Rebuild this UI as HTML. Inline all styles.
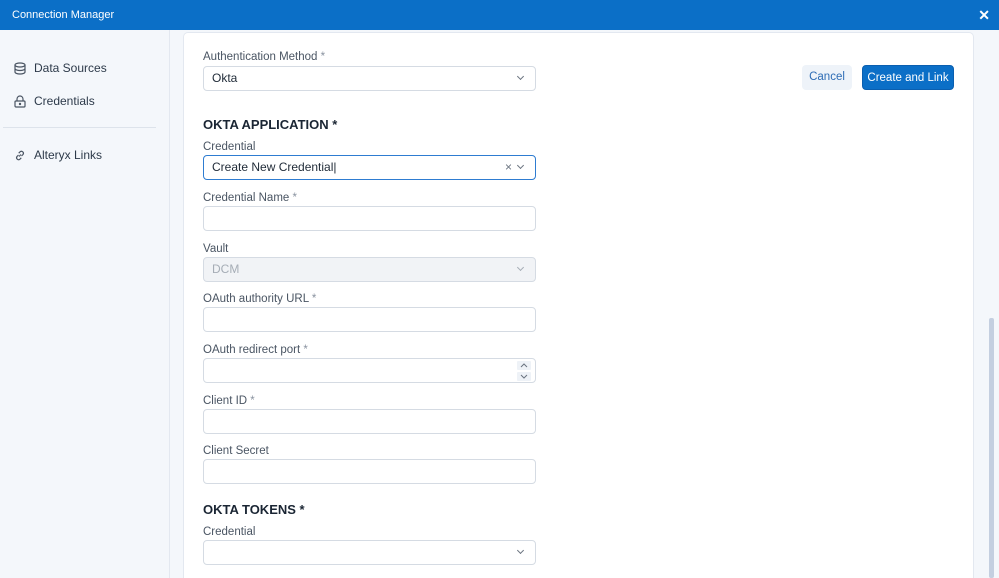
<!DOCTYPE html>
<html><head><meta charset="utf-8"><style>
*{box-sizing:border-box;margin:0;padding:0}
html,body{width:999px;height:578px;overflow:hidden}
body{font-family:"Liberation Sans",sans-serif;background:#f4f7fb;position:relative;color:#1f2a37}
.top{position:absolute;left:0;top:0;width:999px;height:30px;background:#0b6fc7;color:#fff;font-size:11px;line-height:30px;padding-left:12px}
.top .x{position:absolute;right:9px;top:0;font-weight:bold;font-size:14px}
.side{position:absolute;left:0;top:30px;width:170px;height:548px;border-right:1px solid #e3e8f0;background:#f4f7fb}
.nav{position:absolute;left:14px;font-size:12px;color:#2d3a4a;display:flex;align-items:center}
.nav svg{margin-right:8px}
.sep{position:absolute;left:3px;top:97px;width:153px;height:1px;background:#dde3eb}
.card{position:absolute;left:183px;top:32px;width:791px;height:546px;background:#fff;border:1px solid #e3e8f0;border-bottom:none;border-radius:5px 5px 0 0}
.lbl{position:absolute;left:203px;font-size:11.5px;color:#4a5563}
.lbl i{font-style:normal;color:#8a93a0}
.inp{position:absolute;left:203px;width:333px;height:25px;border:1px solid #d5dbe3;border-radius:4px;background:#fff;font-size:12px;line-height:23px;padding-left:8px;color:#1f2a37}
.chev{position:absolute;right:12px;top:7px;width:5px;height:5px;border-right:1.2px solid #6b7480;border-bottom:1.2px solid #6b7480;transform:rotate(45deg)}
h2{position:absolute;left:203px;font-size:13px;font-weight:bold;color:#1a2533}
.btn{position:absolute;top:65px;height:25px;border-radius:4px;font-size:11.5px;line-height:25px;text-align:center}
.sb{position:absolute;left:989px;top:318px;width:5px;height:260px;background:#c4cfe0;border-radius:2px}
</style></head><body>
<div class="top">Connection Manager<span class="x">✕</span></div>
<div class="side">
<div class="nav" style="top:31px"><svg width="12" height="13" viewBox="0 0 12 13" fill="none" stroke="#4a5563" stroke-width="1.2"><ellipse cx="6" cy="3" rx="5" ry="2"/><path d="M1 3v7c0 1.1 2.2 2 5 2s5-.9 5-2V3M1 6.5c0 1.1 2.2 2 5 2s5-.9 5-2"/></svg>Data Sources</div>
<div class="nav" style="top:64px"><svg width="12" height="13" viewBox="0 0 12 13" fill="none" stroke="#4a5563" stroke-width="1.2"><rect x="1" y="6" width="10" height="6" rx="1"/><path d="M3 6V4a3 3 0 0 1 6 0v2"/><circle cx="6" cy="9" r=".6" fill="#4a5563"/></svg>Credentials</div>
<div class="sep"></div>
<div class="nav" style="top:118px"><svg width="12" height="13" viewBox="0 0 12 12" fill="none" stroke="#4a5563" stroke-width="1.2"><path d="M5 7l2-2M4.5 5.5L3 7a2 2 0 0 0 2.8 2.8l1.5-1.5M7.5 6.5L9 5a2 2 0 0 0-2.8-2.8L4.7 3.7"/></svg>Alteryx Links</div>
</div>
<div class="card"></div>
<div class="lbl" style="top:51px">Authentication Method <i>*</i></div>
<div class="inp" style="top:66px">Okta<span class="chev"></span></div>
<div class="btn" style="left:802px;width:50px;background:#eef3f9;color:#2d6cb5">Cancel</div>
<div class="btn" style="left:862px;width:92px;background:#0b6fc7;color:#fff;border:1px solid #0a5fb0">Create and Link</div>
<h2 style="top:117px">OKTA APPLICATION *</h2>
<div class="lbl" style="top:141px">Credential</div>
<div class="inp" style="top:155px;border:1.5px solid #2e7cd1">Create New Credential|<span style="position:absolute;right:23px;top:0;color:#6b7480;font-size:12px">×</span><span class="chev"></span></div>
<div class="lbl" style="top:192px">Credential Name <i>*</i></div>
<div class="inp" style="top:206px"></div>
<div class="lbl" style="top:243px">Vault</div>
<div class="inp" style="top:257px;background:#f1f3f6;color:#a6adb6">DCM<span class="chev" style="border-color:#a6adb6"></span></div>
<div class="lbl" style="top:293px">OAuth authority URL <i>*</i></div>
<div class="inp" style="top:307px"></div>
<div class="lbl" style="top:344px">OAuth redirect port <i>*</i></div>
<div class="inp" style="top:358px"><svg style="position:absolute;right:4px;top:2px" width="14" height="20" viewBox="0 0 14 20"><rect width="14" height="9" rx="1" fill="#eef2f7"/><rect y="11" width="14" height="9" rx="1" fill="#eef2f7"/><path d="M4 6l3-3 3 3M4 14l3 3 3-3" fill="none" stroke="#6b7480" stroke-width="1"/></svg></div>
<div class="lbl" style="top:395px">Client ID <i>*</i></div>
<div class="inp" style="top:409px"></div>
<div class="lbl" style="top:445px">Client Secret</div>
<div class="inp" style="top:459px"></div>
<h2 style="top:502px">OKTA TOKENS *</h2>
<div class="lbl" style="top:526px">Credential</div>
<div class="inp" style="top:540px"><span class="chev"></span></div>
<div class="sb"></div>
</body></html>
